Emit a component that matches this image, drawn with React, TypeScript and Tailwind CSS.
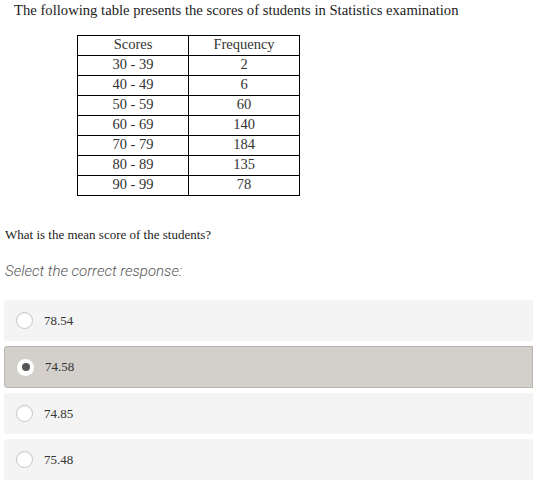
const rows = [
  ["30 - 39", "2"],
  ["40 - 49", "6"],
  ["50 - 59", "60"],
  ["60 - 69", "140"],
  ["70 - 79", "184"],
  ["80 - 89", "135"],
  ["90 - 99", "78"],
];

const options = ["78.54", "74.58", "74.85", "75.48"];

const App = () => {
  const selected = 1;

  return (
    <div className="w-[533px] h-[488px] bg-white overflow-hidden font-['Liberation_Serif',serif] text-[#222]">
      {/* QUESTION */}
      <p className="pl-[14px] pt-[1px] text-[14.67px] leading-[18px]">
        The following table presents the scores of students in Statistics examination
      </p>

      {/* TABLE */}
      <table className="ml-[77px] mt-[16px] border-collapse border border-[#777] text-[14.5px] text-[#333]">
        <thead>
          <tr>
            <th className="w-[111px] h-[20px] p-0 pb-[2px] border border-black font-normal leading-[17px]">Scores</th>
            <th className="w-[111px] h-[20px] p-0 pb-[2px] border border-black font-normal leading-[17px]">Frequency</th>
          </tr>
        </thead>
        <tbody>
          {rows.map(([s, f]) => (
            <tr key={s}>
              <td className="h-[20px] p-0 pb-[2px] border border-black text-center leading-[17px]">{s}</td>
              <td className="h-[20px] p-0 pb-[2px] border border-black text-center leading-[17px]">{f}</td>
            </tr>
          ))}
        </tbody>
      </table>

      <p className="pl-[5px] mt-[31px] text-[13px] leading-[16px]">What is the mean score of the students?</p>

      <p className="pl-[5px] mt-[19px] font-['Roboto',sans-serif] italic font-light text-[15px] leading-[18px] text-[#555]">
        Select the correct response:
      </p>

      {/* OPTIONS */}
      <div className="ml-[4px] mt-[20px] flex flex-col gap-[5px]">
        {options.map((o, i) => (
          <div
            key={o}
            className={
              i === selected
                ? "h-[42px] flex items-center gap-[11px] pl-[12px] rounded-l-[3px] bg-[#d3d0cb] border border-[#b9b5b0]"
                : "h-[41px] flex items-center gap-[11px] pl-[12px] rounded-l-[3px] bg-[#f4f4f4]"
            }
          >
            {i === selected ? (
              <span className="w-[17px] h-[17px] rounded-full bg-white flex items-center justify-center">
                <span className="w-[8px] h-[8px] rounded-full bg-[#555]" />
              </span>
            ) : (
              <span className="w-[17px] h-[17px] rounded-full bg-white border border-[#c6c6c6] shadow-[inset_0_1px_1px_rgba(0,0,0,0.06)]" />
            )}
            <span className="text-[13px] text-[#333]">{o}</span>
          </div>
        ))}
      </div>
    </div>
  );
};

export default App;
